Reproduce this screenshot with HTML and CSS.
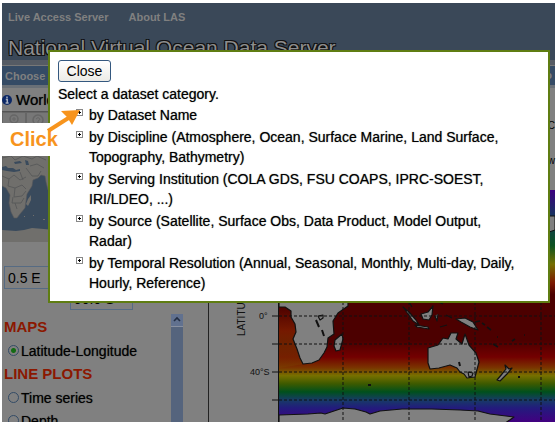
FILE: index.html
```
<!DOCTYPE html>
<html lang="en">
<head>
<meta charset="utf-8">
<title>Live Access Server</title>
<link rel="stylesheet" href="styles.css">
</head>
<body>
<div class="page">
  <header class="banner">
    <nav class="links"><a href="#">Live Access Server</a><a href="#">About LAS</a></nav>
    <h1>National Virtual Ocean Data Server</h1>
  </header>
  <div class="strip"></div>
  <div class="menubar"><button type="button">Choose dataset</button><span>o</span></div>
  <div class="content">
    <aside class="side">
      <h2 class="dataset">
        <svg class="info" viewBox="0 0 10 10"><circle cx="5" cy="5" r="5" fill="#0c2866"/><path d="M5 1.6v1.6M3.8 4.5H5.3V8M3.6 8h3" stroke="#a8b0c0" stroke-width="1.5" fill="none"/></svg>World</h2>
      <div class="tools">
        <button type="button" aria-label="Zoom"><svg viewBox="0 0 12 12"><circle cx="6" cy="5" r="4" fill="none" stroke="#666" stroke-width="1.5"/><path d="M6 3v4M4 5h4M6 9v3" stroke="#666"/></svg></button>
        <button type="button" aria-label="Pan"><svg viewBox="0 0 12 12"><circle cx="6" cy="6" r="5" fill="none" stroke="#666" stroke-width="1.5"/><path d="M4 5q2-3 4 0q0 1-2 2v2" fill="none" stroke="#666"/></svg></button>
      </div>
      <svg class="minimap" viewBox="0 0 206 114" preserveAspectRatio="none">
        <path fill="#394a5c" d="M0 0h206v114H0z"/>
        <path fill="#706f6c" stroke="#57585a" stroke-width=".6" d="M0 0h60v62h-14l-2-8-1-6-4-1-3 3-5 2-1 6-5 8-1 7-1 7-5 6-3 4h-3l-3-6-2-9 1-8-4-7-4-2z"/>
        <path fill="#394a5c" d="M0 39l4-1 2 2 5 0 3 2 4-1v2l-6 1-7-1-5-1zM12 34l6-1 2 2-7 1zM23 32l3 1 1 4-3 0z"/>
        <path fill="none" stroke="#545557" stroke-width=".8" d="M0 48l7 3 5-4 6 5 6-3M7 51l-1 7 7 2 7-3 4 4M13 60l-1 9 8-1 4-5M11 69l-1 6 9 0 3-5M13 75l2 6M18 44l3 8M24 40l6 8 6 0 3-5M0 30l9-2 4 4 8-4 9 3 5-3 9 4M28 38l7-2 7 4"/>
        <path fill="#706f6c" d="M26 71l3-4v5l-3 6-2-2zM41 91h2v1h-2zM31 87h1v1h-1zM22 88h1v1h-1zM0 102l14 1 8-1 8-2 12 1 10 1h154v12H0z"/>
      </svg>
      <div class="coords"><input class="lon" aria-label="Longitude" value="0.5 E"><input class="lat" aria-label="Latitude" value="90.0 S"></div>
      <div class="plots">
        <div class="choices">
          <h3>MAPS</h3>
          <label><input type="radio" name="plot" checked>Latitude-Longitude</label>
          <h3>LINE PLOTS</h3>
          <label><input type="radio" name="plot">Time series</label>
          <label><input type="radio" name="plot">Depth</label>
        </div>
        <div class="scroll"><svg viewBox="0 0 12 12"><path fill="#61718f" d="M0 0h12v12H0z"/><path d="M3 7l3-3 3 3" stroke="#222d42" stroke-width="1.6" fill="none"/></svg></div>
      </div>
    </aside>
    <main class="plot">
      <div class="plottop"><span>C</span><span>w</span></div>
      <svg class="chart" viewBox="209 190 346 232" preserveAspectRatio="xMinYMin slice">
        <defs>
          <linearGradient id="sea" x1="0" y1="190" x2="0" y2="422" gradientUnits="userSpaceOnUse">
            <stop offset="0" stop-color="#3c0080"/><stop offset=".12" stop-color="#12385a"/><stop offset=".24" stop-color="#0c5220"/><stop offset=".32" stop-color="#756d00"/><stop offset=".4" stop-color="#7c1800"/><stop offset=".45" stop-color="#4c0000"/>
            <stop offset=".65" stop-color="#4c0000"/><stop offset=".72" stop-color="#730000"/><stop offset=".765" stop-color="#7a3300"/><stop offset=".8" stop-color="#777000"/><stop offset=".835" stop-color="#3d5a00"/><stop offset=".87" stop-color="#00501c"/><stop offset=".905" stop-color="#173b66"/><stop offset=".94" stop-color="#231b7d"/><stop offset="1" stop-color="#420080"/>
          </linearGradient>
          <linearGradient id="fade" x1="0" y1="0" x2="0" y2="1"><stop offset="0" stop-color="#4c0000"/><stop offset=".4" stop-color="#751900"/><stop offset="1" stop-color="#7a4d00" stop-opacity=".3"/></linearGradient>
        </defs>
        <path fill="#808080" d="M209 190h346v232H209z"/>
        <path fill="url(#sea)" d="M279 190h276v232H279z"/>
        <path fill="url(#fade)" d="M279 306l16 2 3 24 6 32-25 4z"/>
        <g fill="#808080" stroke="#111" stroke-width="1.2" stroke-linejoin="round">
          <path d="M279 290v17h6l6 4v6l4 7 1 8-3 7 4 10 3 9 3 6 9-1 7-3 5-7 3-6 1-9 6-4-1-13 5-8 10-7v-21z"/>
          <path d="M335 340l7-6 1 5-3 11-4 1-2-5z"/>
          <path d="M428 348l10-3 5-7 5 1 3-6h7l-2 6 6 5 3-10 4 11 7 8 3 9-4 15-8 1-3-4-4-2-3-4-7-3-11 3-9 1-2-6zM468 372l5 1-1 3-3 1z"/>
          <path d="M421 314l7-2 5-6-1 9-3 5-6-1zM403 307l6 5 7 8 3 5-6-4zM456 319l9-1 8 4 5 8-8-3-9-5zM415 325l13 2 1 2-12-2zM409 302l3 5M438 302l5 2M435 316l2 5 1-7M440 327l7-2M446 315l6 3"/>
          <path fill="none" stroke-width="1.6" d="M475 322l5-1M482 323l3 2M487 327l4 3M493 344l5 3M512 341l3-2M524 335h1M497 337h1"/>
          <path d="M505 365l4 4 3-1-5 6-7 7-3-1 5-6 4-5zM318 316l5-1v3l-3 2z"/>
          <path d="M279 415l29-1 13-1 4 1 12-4 6-2 12 1 11 3 4 2 10-3 22-2h30l28 1 18 1 12 3 24 3-13 9H279z"/>
        </g>
        <path d="M316 320l3 7M322 330l2 6M459 362l1 4M368 385h3M518 377h2" stroke="#111" stroke-width="2"/>
        <path fill="#808080" stroke="#111" d="M549 216h6v14l-6 2z"/>
        <path d="M279 316h276M279 344h276M279 372h276M279 400h276M343 302v120M409 302v120M475 302v120M541 302v120" stroke="#111" stroke-width="1" stroke-dasharray="3 2" fill="none"/>
        <path d="M278.500 190v232M272 316h6M272 344h6M272 372h6M272 400h6" stroke="#111" fill="none"/>
        <g font-family="Liberation Sans, Arial, sans-serif" font-size="9" fill="#111"><text x="259" y="319">0°</text><text x="250" y="375">40°S</text><text font-size="10" transform="translate(245 336) rotate(-90)">LATITUDE</text></g>
      </svg>
    </main>
  </div>
</div>
<section class="dialog" role="dialog" aria-label="Select a dataset category">
  <button type="button" class="close">Close</button>
  <p>Select a dataset category.</p>
  <ul>
    <li><button type="button" class="plus" aria-label="Expand"></button><span>by Dataset Name</span></li>
    <li><button type="button" class="plus" aria-label="Expand"></button><span>by Discipline (Atmosphere, Ocean, Surface Marine, Land Surface, Topography, Bathymetry)</span></li>
    <li><button type="button" class="plus" aria-label="Expand"></button><span>by Serving Institution (COLA GDS, FSU COAPS, IPRC-SOEST, IRI/LDEO, ...)</span></li>
    <li><button type="button" class="plus" aria-label="Expand"></button><span>by Source (Satellite, Surface Obs, Data Product, Model Output, Radar)</span></li>
    <li><button type="button" class="plus" aria-label="Expand"></button><span>by Temporal Resolution (Annual, Seasonal, Monthly, Multi-day, Daily, Hourly, Reference)</span></li>
  </ul>
</section>
<div class="callout">Click</div>
<svg class="arrow" viewBox="0 0 36 26"><path d="M3 23L25 9" stroke="#f7941d" stroke-width="4"/><path fill="#f7941d" d="M35 2L16 3l6 6 5 8z"/></svg>
</body>
</html>
```
FILE: styles.css
```
* { box-sizing: border-box; }
body {
  margin: 0;
  background: #fff;
  color: #000;
  font-family: "Liberation Sans", Arial, sans-serif;
  font-size: 14px;
}
button, input { font: inherit; color: inherit; }
.page {
  display: flex;
  flex-direction: column;
  height: 100vh;
  padding: 3px 1px 3px 2px;
}
.banner { flex: none; height: 57px; padding: 7px 6px 0; background: #3a4858; overflow: hidden; }
.links { display: flex; gap: 20px; font-size: 11px; line-height: 14px; font-weight: bold; }
.links a { color: #808080; text-decoration: none; }
h1 {
  margin: 12px 0 0;
  color: #8d8d8d;
  font-size: 21px;
  line-height: 24px;
  font-weight: normal;
  white-space: nowrap;
  text-shadow: 1px 1px #111, -1px -1px #111, 1px -1px #111, -1px 1px #111;
}
.strip { flex: none; height: 6px; background: #555b64; border-bottom: 1px solid #777; }
.menubar {
  flex: none;
  display: flex;
  justify-content: space-between;
  height: 22px;
  padding: 2px 3px;
  background: #354b65;
  border-bottom: 3px solid #6a7077;
  color: #808080;
  font-size: 11px;
  font-weight: bold;
  line-height: 14px;
}
.menubar button { padding: 0; border: 0; background: none; }
.content { flex: 1; min-height: 0; display: flex; background: #808080; }
.side { flex: none; width: 207px; display: flex; flex-direction: column; border-right: 1px solid #222; }
.dataset { display: flex; gap: 4px; align-items: center; margin: 0; height: 24px; font-size: 15px; font-weight: normal; border-bottom: 1px solid #555; }
.dataset, .choices label, .dialog { text-shadow: 0 0 1px rgba(0, 0, 0, .6); }
.info { width: 10px; height: 10px; }
.tools { display: flex; height: 16px; }
.tools button { width: 24px; padding: 0; border: 1px solid #666; background: #777; }
.tools svg { display: block; width: 12px; height: 12px; margin: auto; }
.minimap { flex: none; display: block; width: 100%; height: 114px; }
.coords { flex: none; display: grid; padding: 24px 2px 4px; }
.coords input { height: 23px; padding: 0 3px; border: 1px solid #566b83; background: #808080; }
.lon { width: 64px; }
.lat { width: 63px; margin: -2px 0 0 66px; }
.plots { flex: 1; min-height: 0; display: flex; justify-content: space-between; overflow: hidden; }
.choices { padding: 1px 2px; }
h3 { margin: 0; color: #8b1800; font-size: 15px; line-height: 24px; }
.choices label { display: flex; align-items: center; gap: 2px; height: 23px; padding-left: 4px; }
.choices input {
  appearance: none;
  width: 11px;
  height: 11px;
  margin: 0;
  border: 1px solid #334b66;
  border-radius: 50%;
}
.choices input:checked { background: radial-gradient(#146b14 2px, #808080 3px); }
.scroll { width: 12px; margin-right: 25px; background: #55647d; }
.scroll svg { display: block; border-bottom: 1px solid #8890a0; }
.plot { flex: 1; min-width: 0; display: flex; flex-direction: column; }
.plottop { display: flex; flex: none; flex-direction: column; align-items: flex-end; gap: 24px; height: 102px; padding-top: 32px; font-size: 10px; }
.chart { flex: 1; display: block; width: 100%; min-height: 0; }
.dialog {
  position: absolute;
  top: 50px;
  left: 48px;
  right: 6px;
  padding: 8px;
  border: 2px solid #5f7d12;
  background: #fff;
}
.close {
  display: block;
  width: 53px;
  height: 22px;
  padding: 0;
  border: 1px solid #34587f;
  border-radius: 3px;
  background: linear-gradient(#fff, #ecebe6);
}
.dialog p { margin: 2px 0 1px; line-height: 20px; }
.dialog ul { margin: 0; padding: 0 16px 0 18px; list-style: none; }
.dialog li { display: flex; align-items: flex-start; gap: 6px; margin-bottom: 2px; line-height: 20px; }
.dialog li:last-child { margin-bottom: 0; }
.plus {
  flex: none;
  width: 7px;
  height: 7px;
  margin-top: 4px;
  padding: 0;
  border: 1px solid #888;
  background: linear-gradient(#000, #000) center / 3px 1px no-repeat, linear-gradient(#000, #000) center / 1px 3px no-repeat;
}
.callout {
  position: absolute;
  top: 123px;
  left: 0;
  padding: 5px 0 5px 10px;
  width: 60px;
  color: #f7941d;
  background: linear-gradient(90deg, #fff 50px, transparent 50px);
  font-size: 20px;
  line-height: 23px;
  font-weight: bold;
}
.arrow { position: absolute; top: 108px; left: 45px; width: 36px; height: 26px; }
```
